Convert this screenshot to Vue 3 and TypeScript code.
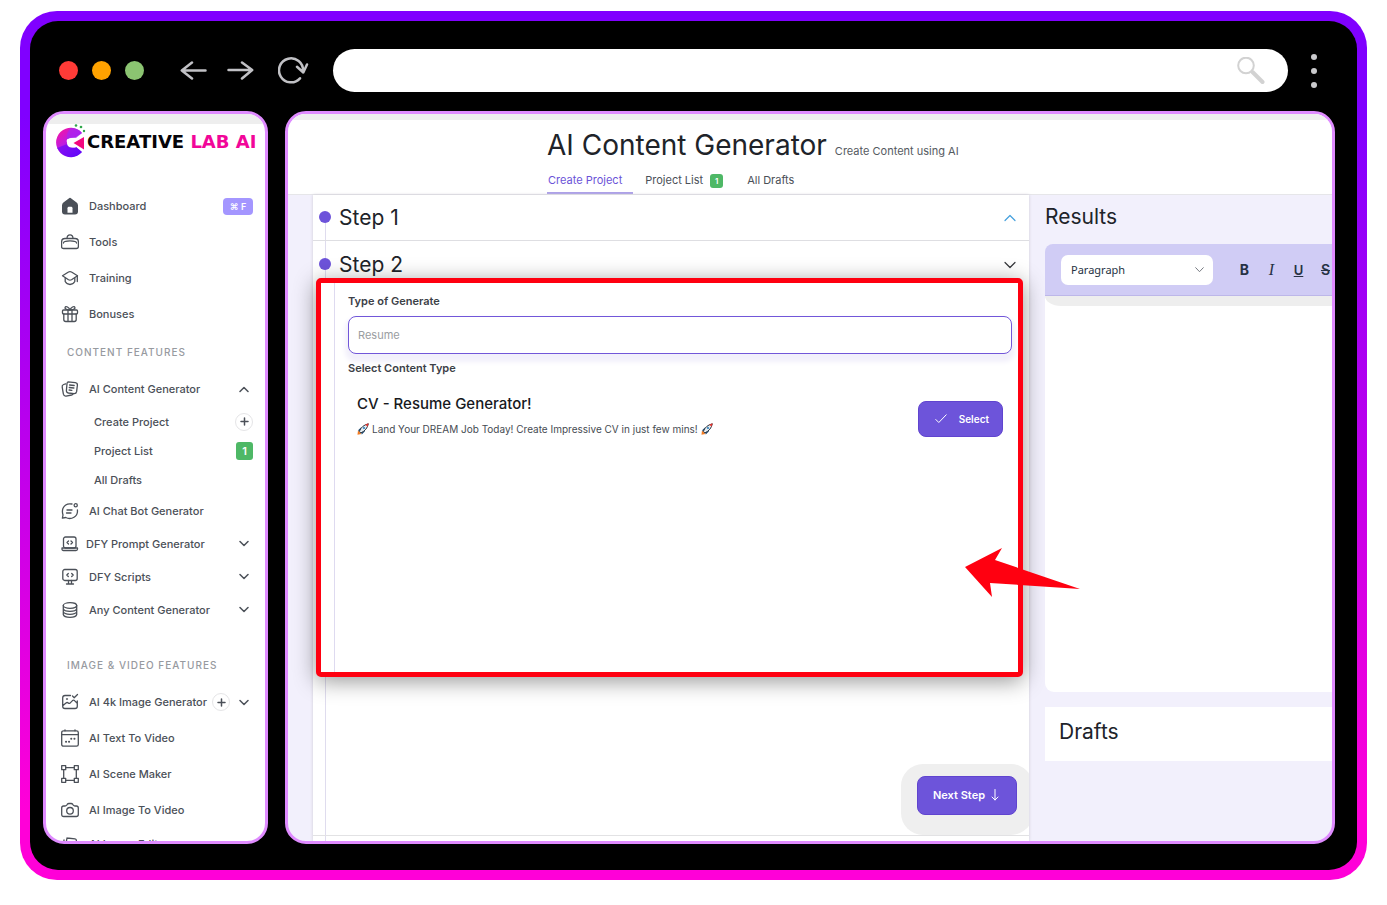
<script setup lang="ts">
import { ref } from 'vue'

interface NavItem {
  label: string
  icon: string
  tight?: boolean
  shortcut?: string
  add?: boolean
  toggle?: 'up' | 'down'
}

const mainItems: NavItem[] = [
  { label: 'Dashboard', icon: 'home', shortcut: '⌘ F' },
  { label: 'Tools', icon: 'tools' },
  { label: 'Training', icon: 'training' },
  { label: 'Bonuses', icon: 'gift' },
]

const contentItems: NavItem[] = [
  { label: 'AI Chat Bot Generator', icon: 'chat' },
  { label: 'DFY Prompt Generator', icon: 'laptop', tight: true, toggle: 'down' },
  { label: 'DFY Scripts', icon: 'monitor', toggle: 'down' },
  { label: 'Any Content Generator', icon: 'database', toggle: 'down' },
]

const mediaItems: NavItem[] = [
  { label: 'AI 4k Image Generator', icon: 'image', add: true, toggle: 'down' },
  { label: 'AI Text To Video', icon: 'calendar' },
  { label: 'AI Scene Maker', icon: 'scene' },
  { label: 'AI Image To Video', icon: 'camera' },
  { label: 'AI Image Editor', icon: 'cards' },
]

const icons: Record<string, string> = {
  home: '<path d="M9 1.8 3 6.400Q2 7.200 2 8.400v6.200Q2 16.500 4 16.500h10q2 0 2-1.900V8.400q0-1.200-1-2Z" fill="currentColor" stroke-width="2"/><path d="M6.500 15.800v-4.600q0-1.400 1.400-1.400h2.200q1.400 0 1.400 1.400v4.600Z" fill="#fff" stroke="none"/>',
  tools: '<path d="M.6 9q0-3.500 3.400-3.500h10q3.400 0 3.400 3.500v4.500q0 2-2 2H2.600q-2 0-2-2Z"/><path d="M6 5.300Q6.200 1.800 9 1.800t3 3.500M2.500 10Q2.500 7.800 9 7.800t6.500 2.200"/>',
  training: '<path d="M1.500 6.800 7.500 3Q9 2.200 10.500 3l6 3.800-6 4Q9 11.600 7.500 10.800Z"/><path d="M4.200 9.200v3.300Q6 15.500 9 15.500t4.800-3V9.200M16.300 7v5.500"/>',
  gift: '<rect x="1.500" y="5" width="15" height="4" rx="1"/><path d="M2.800 9v5.500q0 2 2 2h8.400q2 0 2-2V9M7 5v11.500M11 5v11.500M9 5Q4 4.800 4 2.800 4.500.8 6.500 2T9 5q5-.2 5-2.200-.5-2-2.500-.8T9 5"/>',
  pages: '<path d="m7 1.800 7.300.8q2.300.4 2.100 2.600l-.8 6.500q-.4 2.200-2.600 2l-5.600-.7q-2.200-.4-2-2.600L6 3.800Q6.200 1.800 7 1.800Z"/><path d="M4.700 3.800 2.600 4.500Q.8 5.200 1.200 7.200l1.200 7q.5 2.200 2.700 1.900l5.500-1.100q1.200-.3 1.700-1.200M8.600 5l4.600.5M8.300 7.500l4.600.5M8.100 10l2.800.3"/>',
  chat: '<path d="M11 2Q4.500.8 2 6.300.8 9.500 2 13l-.6 3.200 3.300-.7Q9 17.600 13 15.200T16.400 8M6 8h5M5.500 11h4.500"/><circle cx="14.700" cy="3.300" r="1.600"/>',
  laptop: '<rect x="2.500" y="2" width="12.500" height="11" rx="2"/><path d="M1 13h15.500v1q0 1.500-1.500 1.500H2.500Q1 15.500 1 14ZM7.500 6 6 7.500 7.500 9M10 6l1.500 1.500L10 9"/>',
  monitor: '<rect x="1.800" y="1.500" width="14.400" height="11" rx="2"/><path d="M7.500 12.500v3M10.500 12.500v3M5.500 16h7M7.300 5.500 5.800 7l1.500 1.500M10.700 5.500 12.200 7l-1.500 1.500"/>',
  database: '<ellipse cx="9" cy="4.500" rx="6.700" ry="2.800"/><path d="M2.300 4.500v9Q3 16.300 9 16.300t6.700-2.800v-9M2.300 7.600Q3 10.300 9 10.300t6.700-2.700M2.300 10.700Q3 13.300 9 13.300t6.700-2.600"/>',
  image: '<path d="M9.500 2.500H4q-2.300 0-2.300 2.300v8.400q0 2.300 2.300 2.300h10q2.300 0 2.300-2.300V8M2 12.500l3-2.500q1.200-1 2.300 0t2.200-.4l2-2q1-.8 2 0l2.700 2.600M11.500 3l1.700 1.700L16.500 1.500M5.500 6h1"/>',
  calendar: '<rect x=".7" y="1.800" width="16.600" height="15.400" rx="1.800"/><path d="M.7 5.600h16.600M4 .8v1M14 .8v1"/><path d="M5 12.700h.1M8 12.700h.1M10.200 9.700h.1M13.400 9.700h.1" stroke-width="2"/>',
  scene: '<rect x=".7" y=".7" width="4" height="4"/><rect x="13.300" y=".7" width="4" height="4"/><rect x=".7" y="13.300" width="4" height="4"/><rect x="13.300" y="13.300" width="4" height="4"/><path d="M4.700 2.700h8.600M4.700 15.300h8.600M2.700 4.700v8.600M15.300 4.700v8.600"/>',
  camera: '<path d="M.7 7q0-2 2-2H4q1 0 1.700-.9l.5-.7Q6.800 2.500 8 2.500h2q1.200 0 1.800.9l.5.7Q13 5 14 5h1.300q2 0 2 2v6.500q0 2-2 2H2.700q-2 0-2-2Z"/><circle cx="9" cy="9.800" r="3.300"/>',
  cards: '<path d="m6 3 8 .8q1.500.2 1.400 2L14.500 15M6 3 4 14M3 5 2 14"/>',
}

const contentType = ref('')
const format = ref('Paragraph')
</script>

<template>
  <div class="frame">
    <div class="screen">
      <header class="chrome">
        <div class="lights"><i class="red"></i><i class="amber"></i><i class="green"></i></div>
        <button class="bare back" aria-label="Back">
          <svg width="27" height="20" viewBox="0 0 27 20"><path d="M25.500 9.500H2M12 1.500 1.800 9.500 12 17.500" /></svg>
        </button>
        <button class="bare forward" aria-label="Forward">
          <svg width="27" height="20" viewBox="0 0 27 20"><path d="M1.500 9H25M15 1.500l10.200 7.500L15 17.500" /></svg>
        </button>
        <button class="bare reload" aria-label="Reload">
          <svg width="31" height="28" viewBox="0 0 31 28"><path d="M22 21.300A12 12 0 1 1 25 14M19 9.800l6.300 5.700 3.700-8" /></svg>
        </button>
        <div class="address">
          <input type="text" aria-label="Address" />
          <svg width="28" height="28" viewBox="0 0 28 28"><circle cx="9" cy="8.500" r="7.800" /><path d="m15.500 15 10 10" class="handle" /></svg>
        </div>
        <button class="bare more" aria-label="More"><i></i><i></i><i></i></button>
      </header>

      <div class="panels">
        <aside class="sidebar">
          <div class="strip"></div>
          <a href="#" class="logo">
            <svg width="30" height="34" viewBox="0 0 30 34" aria-hidden="true">
              <defs>
                <linearGradient id="mark" x1="0" y1="0" x2=".7" y2="1"><stop offset="0" stop-color="#ff1296" /><stop offset=".5" stop-color="#c01be0" /><stop offset="1" stop-color="#6207f5" /></linearGradient>
              </defs>
              <path d="M26 9A14.700 14.700 0 1 0 26 28L20 23Q14 25 11.500 20T14 14L20 13Z" fill="url(#mark)" />
              <path d="M15 4Q22 4 26 9l-6 5-9 1Q10 8 15 4Z" fill="#a526f2" opacity=".7" />
              <path d="M1 24 11.500 20Q14 25 20 23l6 5Q15 37 5 29Z" fill="#6708fa" opacity=".65" />
              <path d="M11 18.500q0-4.500 5-4.500l4 0-4 5 4 4.500-4 0q-5 0-5-5Z" fill="#fff" />
              <path d="m17.500 19 10.500-6v12.500Z" fill="#f3087e" />
              <g fill="#31a84b"><circle cx="20" cy="1.500" r="1.300" /><circle cx="25" cy="3" r="1.300" /><circle cx="28" cy="7" r="1.200" /></g>
            </svg>
            <span>CREATIVE <b>LAB AI</b></span>
          </a>
          <nav>
            <div v-for="item in mainItems" :key="item.label" class="row">
              <a href="#"><svg class="icon" viewBox="0 0 18 18" v-html="icons[item.icon]"></svg>{{ item.label }}</a>
              <kbd v-if="item.shortcut">{{ item.shortcut }}</kbd>
            </div>
            <h6>CONTENT FEATURES</h6>
            <div class="row">
              <a href="#"><svg class="icon" viewBox="0 0 18 18" v-html="icons.pages"></svg>AI Content Generator</a>
              <button class="bare toggle" aria-label="Collapse AI Content Generator"><svg width="10" height="7" viewBox="0 0 10 7"><path d="m1 5.500 4-4 4 4" /></svg></button>
            </div>
            <div class="row sub"><a href="#">Create Project</a><button class="add" aria-label="Add project"><svg width="9" height="9" viewBox="0 0 9 9"><path d="M4.500 1v7M1 4.500h7" /></svg></button></div>
            <div class="row sub"><a href="#">Project List</a><span class="count">1</span></div>
            <div class="row sub"><a href="#">All Drafts</a></div>
            <div v-for="item in contentItems" :key="item.label" class="row compact" :class="{ tight: item.tight }">
              <a href="#"><svg class="icon" viewBox="0 0 18 18" v-html="icons[item.icon]"></svg>{{ item.label }}</a>
              <button v-if="item.toggle" class="bare toggle" :aria-label="'Expand ' + item.label"><svg width="10" height="7" viewBox="0 0 10 7"><path d="m1 1.500 4 4 4-4" /></svg></button>
            </div>
            <h6 class="second">IMAGE &amp; VIDEO FEATURES</h6>
            <div v-for="item in mediaItems" :key="item.label" class="row">
              <a href="#"><svg class="icon" viewBox="0 0 18 18" v-html="icons[item.icon]"></svg>{{ item.label }}</a>
              <button v-if="item.add" class="add" :aria-label="'Add to ' + item.label"><svg width="9" height="9" viewBox="0 0 9 9"><path d="M4.500 1v7M1 4.500h7" /></svg></button>
              <button v-if="item.toggle" class="bare toggle" :aria-label="'Expand ' + item.label"><svg width="10" height="7" viewBox="0 0 10 7"><path d="m1 1.500 4 4 4-4" /></svg></button>
            </div>
          </nav>
        </aside>

        <main class="main">
          <header class="head">
            <div class="heading"><h1>AI Content Generator</h1><span>Create Content using AI</span></div>
            <nav class="tabs">
              <a href="#" class="active">Create Project</a>
              <a href="#">Project List <span class="count small">1</span></a>
              <a href="#">All Drafts</a>
            </nav>
          </header>

          <div class="work">
            <section class="steps">
              <div class="step first">
                <i class="dot"></i><h2>Step 1</h2>
                <button class="bare fold blue" aria-label="Collapse step 1"><svg width="12" height="8" viewBox="0 0 12 8"><path d="M1 6.500 6 1.500l5 5" /></svg></button>
              </div>
              <div class="step">
                <i class="dot"></i><h2>Step 2</h2>
                <button class="bare fold" aria-label="Expand step 2"><svg width="12" height="8" viewBox="0 0 12 8"><path d="m1 1.500 5 5 5-5" /></svg></button>
              </div>
              <div class="focus">
                <div class="form">
                  <label for="kind">Type of Generate</label>
                  <input id="kind" v-model="contentType" type="text" placeholder="Resume" />
                  <h5>Select Content Type</h5>
                  <article>
                    <div class="about">
                      <h3>CV - Resume Generator!</h3>
                      <p>
                        <svg class="rocket" viewBox="0 0 12 12"><path d="M.5 11.700 1 7.500 4.500 11Z" fill="#f47b20" /><path d="M4 4.500.8 7.500l2.200.5 1 1 .8 2.500L8 8.200Z" fill="#1f4e79" /><path d="M2.500 8Q4.500 2.500 11.300.8 10.200 7 4.200 9.800Z" fill="#e4edf3" stroke="#2c3640" stroke-width="1" /><path d="M8.200 1.600 11.700.3l-1.200 3.500Z" fill="#e1332d" /><circle cx="7" cy="5" r="1.100" fill="#2f80bd" /></svg>
                        Land Your DREAM Job Today! Create Impressive CV in just few mins!
                        <svg class="rocket" viewBox="0 0 12 12"><path d="M.5 11.700 1 7.500 4.500 11Z" fill="#f47b20" /><path d="M4 4.500.8 7.500l2.200.5 1 1 .8 2.500L8 8.200Z" fill="#1f4e79" /><path d="M2.500 8Q4.500 2.500 11.300.8 10.200 7 4.200 9.800Z" fill="#e4edf3" stroke="#2c3640" stroke-width="1" /><path d="M8.200 1.600 11.700.3l-1.200 3.500Z" fill="#e1332d" /><circle cx="7" cy="5" r="1.100" fill="#2f80bd" /></svg>
                      </p>
                    </div>
                    <button class="primary choose"><svg width="12" height="10" viewBox="0 0 12 10"><path d="m.8 5.500 3 3L11.200.8" /></svg>Select</button>
                  </article>
                </div>
                <svg class="pointer" width="116" height="50" viewBox="0 0 116 50" aria-hidden="true"><path d="M1 19 38 0 31 12 116 41 26 35 28 49Z" /></svg>
              </div>
              <div class="next">
                <button class="primary">Next Step<svg width="8" height="12" viewBox="0 0 8 12"><path d="M4 .5v10.500M1 8l3 3 3-3" /></svg></button>
              </div>
              <div class="tail"></div>
            </section>

            <section class="results">
              <h2>Results</h2>
              <div class="editor">
                <div class="toolbar">
                  <div class="picker">
                    <select v-model="format" aria-label="Text style"><option>Paragraph</option></select>
                    <svg width="9" height="6" viewBox="0 0 9 6"><path d="m.7.700 3.800 4 3.800-4" /></svg>
                  </div>
                  <button class="bare tool bold" aria-label="Bold">B</button>
                  <button class="bare tool italic" aria-label="Italic">I</button>
                  <button class="bare tool under" aria-label="Underline">U</button>
                  <button class="bare tool strike" aria-label="Strikethrough">S</button>
                </div>
                <div class="paper"><div class="shade"></div></div>
              </div>
              <div class="drafts"><h2>Drafts</h2></div>
            </section>
          </div>
        </main>
      </div>
    </div>
  </div>
</template>

<style>
body { margin: 0; background: #fff; }
</style>

<style scoped>
* { box-sizing: border-box; }
h1, h2, h3, h5, h6, p { margin: 0; font-weight: 400; }
a { color: inherit; text-decoration: none; }
i { display: block; }
svg { flex: none; fill: none; stroke: currentColor; stroke-linecap: round; stroke-linejoin: round; }
button, input, select { font-family: inherit; margin: 0; }
.bare { padding: 0; border: 0; background: none; color: inherit; display: flex; align-items: center; justify-content: center; }

.frame { margin: 11px 20px 0; height: calc(100vh - 36px); padding: 10px; border-radius: 37px; background: linear-gradient(#8000ff 12%, #ff00d8 92%); font-family: Inter, "Liberation Sans", sans-serif; color: #202329; }
.screen { height: 100%; background: #000; border-radius: 28px; padding: 28px 22px 26px 13px; display: flex; flex-direction: column; gap: 19px; }

.chrome { display: flex; align-items: center; height: 43px; flex: none; padding: 0 18px 0 16px; color: #c1c1c5; }
.chrome svg { stroke-width: 2.5; }
.lights { display: flex; gap: 14px; margin-right: 36px; }
.lights i { width: 19px; height: 19px; border-radius: 50%; }
.red { background: #ff3b37; }
.amber { background: #ffa200; }
.green { background: #8bc471; }
.back { margin-right: 20px; }
.forward { margin-right: 24px; }
.address { flex: 1; height: 43px; margin: 0 23px 0 24px; border-radius: 22px; background: #fff; display: flex; align-items: center; padding: 0 23px 0 20px; color: #d2d2d2; }
.address input { flex: 1; border: 0; outline: 0; background: none; font-size: 16px; }
.address svg { stroke-width: 2; }
.address .handle { stroke-width: 4; }
.more { flex-direction: column; gap: 8px; }
.more i { width: 6px; height: 6px; border-radius: 50%; background: #c9c9cc; }

.panels { flex: 1; min-height: 0; display: flex; gap: 17px; }
.sidebar, .main { border: 3px solid #df8bff; border-radius: 21px; overflow: hidden; background: #fff; }
.sidebar { width: 225px; flex: none; color: #4b5058; }
.strip { height: 10px; background: #eee; }
.logo { display: flex; align-items: center; gap: 1px; height: 34px; margin: 0 0 30px 10px; font: bold 18px "DejaVu Sans", sans-serif; color: #060408; white-space: nowrap; }
.logo svg { stroke: none; }
.logo b { color: #f20699; }

.row { height: 36px; display: flex; align-items: center; padding: 0 12px 0 15px; font-size: 11px; font-weight: 500; white-space: nowrap; }
.row a { flex: 1; display: flex; align-items: center; gap: 10px; }
.row:last-child { height: 32px; }
.icon { width: 18px; height: 18px; stroke-width: 1.3; }
.compact { height: 33px; }
.tight a { gap: 7px; }
.sub { height: 29px; padding-left: 48px; }
.sidebar h6 { height: 39px; padding-left: 21px; font-size: 9px; line-height: 40px; font-weight: 600; letter-spacing: 1px; color: #979a9f; }
.sidebar h6 { font-size: 10px; font-weight: 500; }
.sidebar .second { margin-top: 19px; }
.toggle { width: 18px; height: 18px; }
.toggle svg { stroke-width: 1.5; }
.add { width: 18px; height: 18px; padding: 0; border: 1px solid #e5e5e7; border-radius: 50%; background: #fff; color: #4b5058; display: flex; align-items: center; justify-content: center; }
.add svg { stroke-width: 1.5; }
.add + .toggle { margin-left: 5px; }
kbd { width: 30px; height: 17px; border-radius: 4px; background: #a496ff; color: #fff; font: 600 9px/17px Inter, "DejaVu Sans", sans-serif; text-align: center; }
.count { width: 17px; height: 18px; border-radius: 3px; background: #4eb866; color: #fff; font-size: 11px; line-height: 18px; font-weight: 600; text-align: center; }
.small { width: 13px; height: 14px; margin-top: 2px; font-size: 8px; line-height: 14px; }

.main { flex: 1; min-width: 0; display: flex; flex-direction: column; background: #f2f0fc; }
.head { flex: none; background: #fff; border-top: 6px solid #eee; border-bottom: 1px solid #e6e6e9; padding-left: calc(25% - 2px); }
.heading { display: flex; align-items: baseline; gap: 8px; height: 48px; }
h1 { font-size: 28px; line-height: 50px; }
.heading span { font-size: 11px; color: #555a61; }
.tabs { display: flex; height: 26px; font-size: 11px; color: #4b5058; }
.tabs a { display: flex; align-items: center; gap: 7px; padding-bottom: 2px; margin-right: 24px; }
.tabs .active { color: #6b53d8; border-bottom: 2px solid #ab9fe8; padding: 0 11px 0 1px; margin-right: 12px; }

.work { flex: 1; min-height: 0; display: grid; grid-template-columns: 716fr 287fr; gap: 16px; padding-left: 25px; }
.steps { min-width: 0; display: flex; flex-direction: column; background: linear-gradient(#dfdcee, #dfdcee) 12px 20px / 1px 100% no-repeat, #fff; box-shadow: 0 0 3px #cccad6; }
h2 { font-size: 21px; line-height: 24px; }
.step { display: flex; align-items: center; gap: 8px; padding: 12px 13px 1px 6px; }
.first { padding: 11px 13px 10px 6px; border-bottom: 1px solid #dedee2; }
.dot { width: 12px; height: 12px; margin-bottom: 3px; border-radius: 50%; background: #6d53da; }
.fold { margin-left: auto; color: #34363a; }
.fold svg { stroke-width: 1.2; }
.blue { color: #45a0dd; }
.focus { position: relative; margin: 0 6px 0 3px; min-height: 399px; border: 5px solid #ff0010; border-radius: 5px; background: #fff; box-shadow: 0 4px 22px rgba(0, 0, 0, .42); display: flex; padding-left: 13px; }
.form { flex: 1; border-left: 1px solid #dedaf0; padding: 10px 6px 0 13px; }
.form label, h5 { display: block; font-size: 11px; line-height: 16px; font-weight: 600; color: #3c4047; }
.form input { display: block; width: 100%; height: 38px; margin: 7px 0 6px; padding: 0 9px; border: 1px solid #7257d9; border-radius: 8px; outline: 0; background: #fff; font-size: 11px; color: #34363a; box-shadow: 0 5px 5px 3px #f2f0fb; }
.form input::placeholder { color: #9a9da1; opacity: 1; }
article { display: flex; align-items: center; justify-content: space-between; margin: 16px 9px 0; padding-top: 9px; }
.about { align-self: flex-start; margin-top: -7px; }
h3 { font-size: 15px; line-height: 20px; font-weight: 500; color: #17191d; }
.about p { display: flex; align-items: center; gap: 3px; margin-top: 9px; font-size: 10px; line-height: 12px; color: #464b52; }
.rocket { width: 12px; height: 12px; stroke: none; }
.primary { height: 39px; border: 1px solid #6044cf; border-radius: 8px; background: #6d54da; color: #fff; font-size: 11px; font-weight: 600; display: flex; align-items: center; padding: 0 17px 2px 15px; gap: 6px; }
.choose { height: 36px; gap: 12px; padding: 0 13px 1px 16px; font-size: 10px; }
.pointer { position: absolute; z-index: 3; top: 265px; right: -62px; fill: #ff0010; stroke: none; }
.next { flex: 1; overflow: hidden; display: flex; align-items: flex-end; justify-content: flex-end; padding: 0 12px 20px; }
.next .primary { box-shadow: 0 4px 0 16px #efefef; }
.tail { flex: none; height: 6px; border-top: 1px solid #e2e2e4; }

.results { min-width: 0; position: relative; z-index: 1; display: flex; flex-direction: column; padding-top: 10px; }
.editor { margin: 15px 0; }
.toolbar { height: 52px; display: flex; align-items: center; background: #d0ccf5; border-bottom: 1px solid #bdb7e9; border-radius: 8px 0 0 0; padding-left: 16px; overflow: hidden; color: #263244; }
.picker { position: relative; width: 152px; flex: none; margin-right: 18px; }
.picker select { display: block; width: 100%; height: 30px; padding: 0 10px; border: 0; border-radius: 7px; background: #fff; appearance: none; font: 11px "Noto Sans", sans-serif; color: #263244; }
.picker svg { position: absolute; right: 9px; top: 12px; color: #777b82; pointer-events: none; }
.tool { width: 27px; height: 24px; flex: none; font-size: 14px; }
.bold { font-weight: 700; }
.italic { font-family: "Liberation Serif", serif; font-style: italic; font-size: 16px; }
.under { text-decoration: underline; font-weight: 600; font-size: 13px; }
.strike { text-decoration: line-through; font-weight: 600; }
.paper { min-height: 396px; border-radius: 0 0 0 9px; background: #fff; }
.shade { height: 10px; border-bottom-left-radius: 16px 10px; background: #eee; }
.drafts { background: #fff; padding: 13px 14px 17px; }
</style>
